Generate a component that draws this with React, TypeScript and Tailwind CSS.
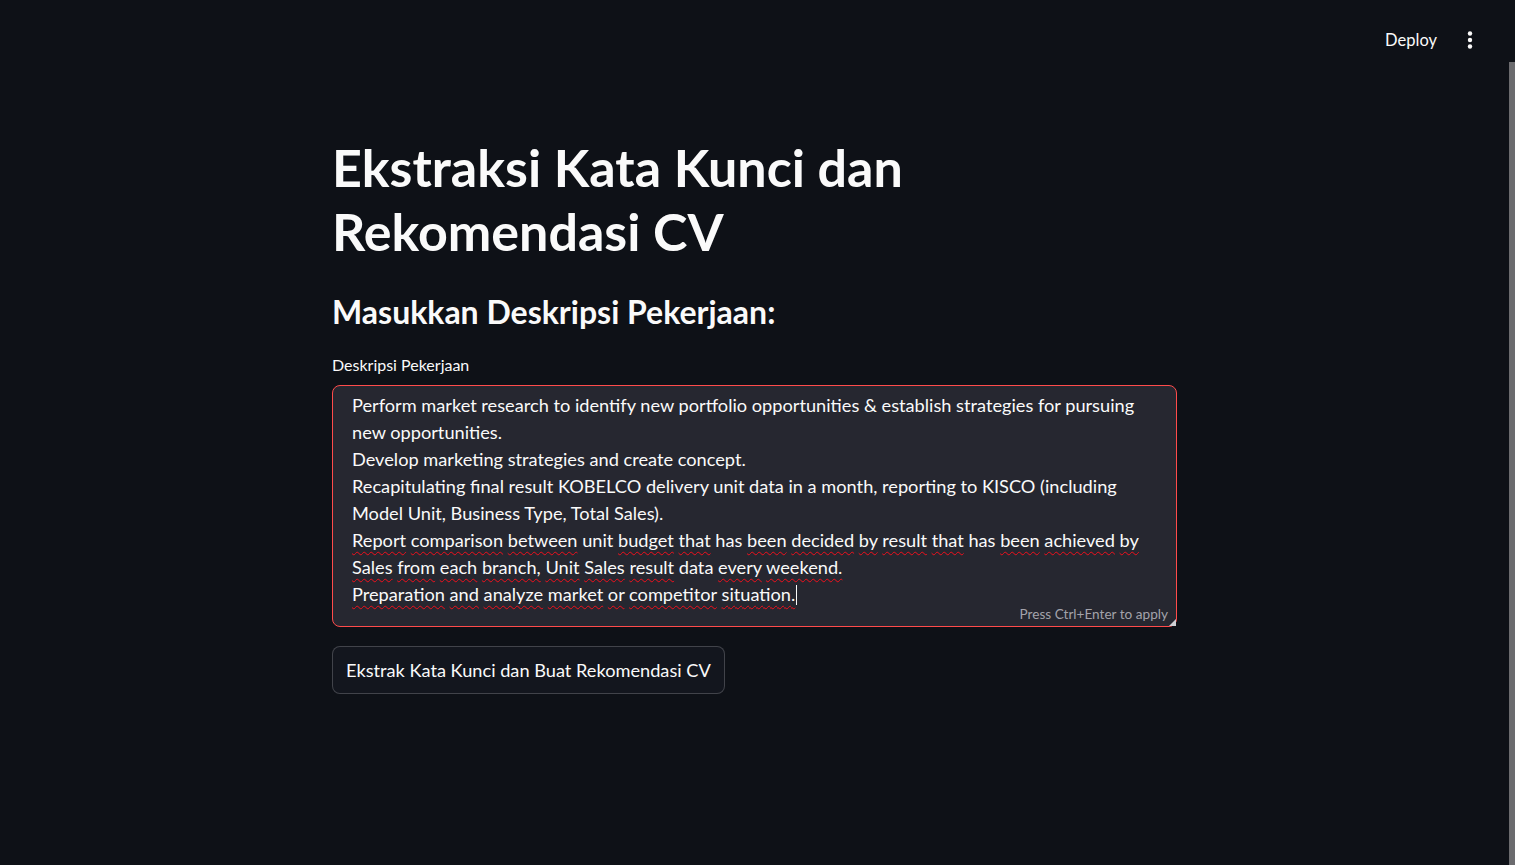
import React from 'react';

const font = "font-['Lato','Liberation_Sans',sans-serif]";

type Word = { t: string; bad?: boolean };

// words flagged by the spell checker get the red squiggle
const sq = 'underline decoration-wavy decoration-[#f0101c] decoration-1 underline-offset-[4px]';

const Line: React.FC<{ words: Word[] }> = ({ words }) => (
  <div className="whitespace-nowrap">
    {words.map((w, i) => (
      <React.Fragment key={i}>
        {i > 0 && ' '}
        <span className={w.bad ? sq : ''}>{w.t}</span>
      </React.Fragment>
    ))}
  </div>
);

const split = (s: string, ok: string[] = []): Word[] =>
  s.split(' ').map((t) => ({ t, bad: !ok.includes(t) }));

const plain = (s: string): Word[] => s.split(' ').map((t) => ({ t }));

const App: React.FC = () => {
  const report: Word[] = [
    { t: 'Report', bad: true },
    { t: 'comparison', bad: true },
    { t: 'between', bad: true },
    { t: 'unit' },
    { t: 'budget', bad: true },
    { t: 'that', bad: true },
    { t: 'has' },
    { t: 'been', bad: true },
    { t: 'decided', bad: true },
    { t: 'by', bad: true },
    { t: 'result', bad: true },
    { t: 'that', bad: true },
    { t: 'has' },
    { t: 'been', bad: true },
    { t: 'achieved', bad: true },
    { t: 'by', bad: true },
  ];

  return (
    <div className={`${font} flex h-[865px] w-full overflow-hidden bg-[#0e1117] text-[#fafafa]`}>
      <div className="flex flex-1 flex-col">
        {/* Header */}
        <header className="flex h-[80px] items-center justify-end pr-[23px]">
          <span className="text-[16.5px] leading-none">Deploy</span>
          <button className="ml-[17px] flex h-[32px] w-[32px] items-center justify-center">
            <svg width="6" height="18" viewBox="0 0 6 18" fill="#fafafa">
              <circle cx="3" cy="2.5" r="2.2" />
              <circle cx="3" cy="9" r="2.2" />
              <circle cx="3" cy="15.5" r="2.2" />
            </svg>
          </button>
        </header>

        <main className="mx-auto w-[845px]">
          <h1 className="mt-[56px] text-[52px] font-bold leading-[63.5px]">
            Ekstraksi Kata Kunci dan
            <br />
            Rekomendasi CV
          </h1>

          <h2 className="mt-[30px] text-[32px] font-bold leading-[38px]">Masukkan Deskripsi Pekerjaan:</h2>

          <label className="mt-[22px] block text-[16px] leading-[24px]">Deskripsi Pekerjaan</label>

          <div className="relative mt-[8px] h-[242px] rounded-[8px] border border-[#ff4b4b] bg-[#262730] pl-[19px] pt-[6px] text-[18.2px] leading-[27px]">
            <Line words={plain('Perform market research to identify new portfolio opportunities & establish strategies for pursuing')} />
            <Line words={plain('new opportunities.')} />
            <Line words={plain('Develop marketing strategies and create concept.')} />
            <Line words={plain('Recapitulating final result KOBELCO delivery unit data in a month, reporting to KISCO (including')} />
            <Line words={plain('Model Unit, Business Type, Total Sales).')} />
            <Line words={report} />
            <Line words={split('Sales from each branch, Unit Sales result data every weekend.', ['data'])} />
            <div className="flex items-center whitespace-nowrap">
              <Line words={split('Preparation and analyze market or competitor situation.')} />
              <span className="ml-px inline-block h-[20px] w-px bg-[#fafafa]" />
            </div>

            <span className="absolute bottom-[4px] right-[8px] text-[13.6px] leading-none text-[#a3a3ab]">
              Press Ctrl+Enter to apply
            </span>
            <svg className="absolute bottom-0 right-0" width="7" height="7" viewBox="0 0 7 7">
              <path d="M7 0 L7 7 L0 7 Z" fill="#d0d0d4" />
            </svg>
          </div>

          <button className="mt-[19px] h-[48px] rounded-[8px] border border-[#fafafa]/20 bg-[#13161e] px-[13px] text-[18.2px] leading-none">
            Ekstrak Kata Kunci dan Buat Rekomendasi CV
          </button>
        </main>
      </div>

      {/* scroll bar */}
      <div className="flex w-[6px] flex-col">
        <div className="mt-[62px] flex-1 bg-[#6b6b6e]" />
      </div>
    </div>
  );
};

export default App;
